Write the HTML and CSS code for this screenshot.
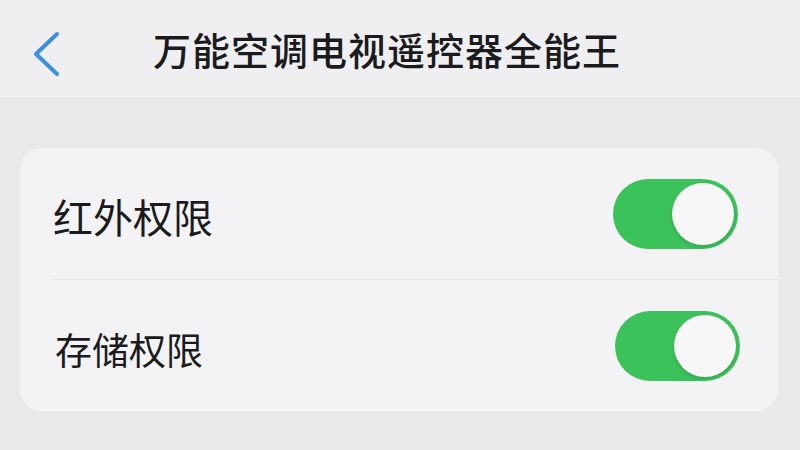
FILE: index.html
```html
<!DOCTYPE html>
<html lang="zh-CN">
<head>
  <meta charset="UTF-8">
  <meta name="viewport" content="width=device-width, initial-scale=1.0">
  <title>权限设置</title>
  <link rel="stylesheet" href="styles.css">
</head>
<body>

  <!-- Top bar -->
  <div class="nav-bar">
    <a class="back" href="#">
      <svg width="30" height="46" viewBox="0 0 30 46">
        <path d="M26 3 L5 23 L26 43" fill="none" stroke="#3b8fe2" stroke-width="4" stroke-linecap="round" stroke-linejoin="round"/>
      </svg>
    </a>
    <h1 class="nav-title">万能空调电视遥控器全能王</h1>
  </div>

  <!-- Permission list -->
  <div class="card">
    <div class="row">
      <span class="row-label">红外权限</span>
      <label class="switch on"><span class="knob"></span></label>
    </div>
    <div class="row">
      <span class="row-label small">存储权限</span>
      <label class="switch on"><span class="knob"></span></label>
    </div>
  </div>

</body>
</html>
```

FILE: styles.css
```css
body {
  margin: 0;
  background-color: #e9e9ec;
  font-family: "Noto Sans CJK SC", "Noto Sans", sans-serif;
  color: #1b1b1d;
}

/* Top bar */
.nav-bar {
  height: 97px;
  background-color: #efeff1;
  display: flex;
  align-items: center;
}

.back {
  display: flex;
  margin-left: 31px;
  margin-top: 10px;
}

.nav-title {
  margin: 0 0 0 92px;
  font-size: 38px;
  font-weight: 500;
  letter-spacing: 1px;
  line-height: 1;
}

/* Permission list */
.card {
  margin: 51px 22px 0 20px;
  background-color: #f3f3f5;
  border-radius: 22px;
  overflow: hidden;
}

.row {
  height: 131px;
  display: flex;
  align-items: center;
  justify-content: space-between;
  padding: 0 40px 0 33px;
}

.row + .row {
  border-top: 1px solid #e4e4e7;
  margin-left: 34px;
  padding-left: 1px;
}

.row-label {
  font-size: 40px;
  line-height: 1;
  margin-top: 4px;
}

.row-label.small {
  font-size: 37px;
  margin-top: 8px;
}

.switch {
  width: 125px;
  height: 70px;
  border-radius: 35px;
  background-color: #3cc25b;
  display: flex;
  align-items: center;
  justify-content: flex-end;
  padding: 0 4px;
  box-sizing: border-box;
}

.row + .row .switch {
  margin-right: -2px;
}

.knob {
  width: 62px;
  height: 62px;
  border-radius: 50%;
  background-color: #f7f7f7;
  box-shadow: 0 2px 4px rgba(0, 0, 0, 0.15);
}
```
